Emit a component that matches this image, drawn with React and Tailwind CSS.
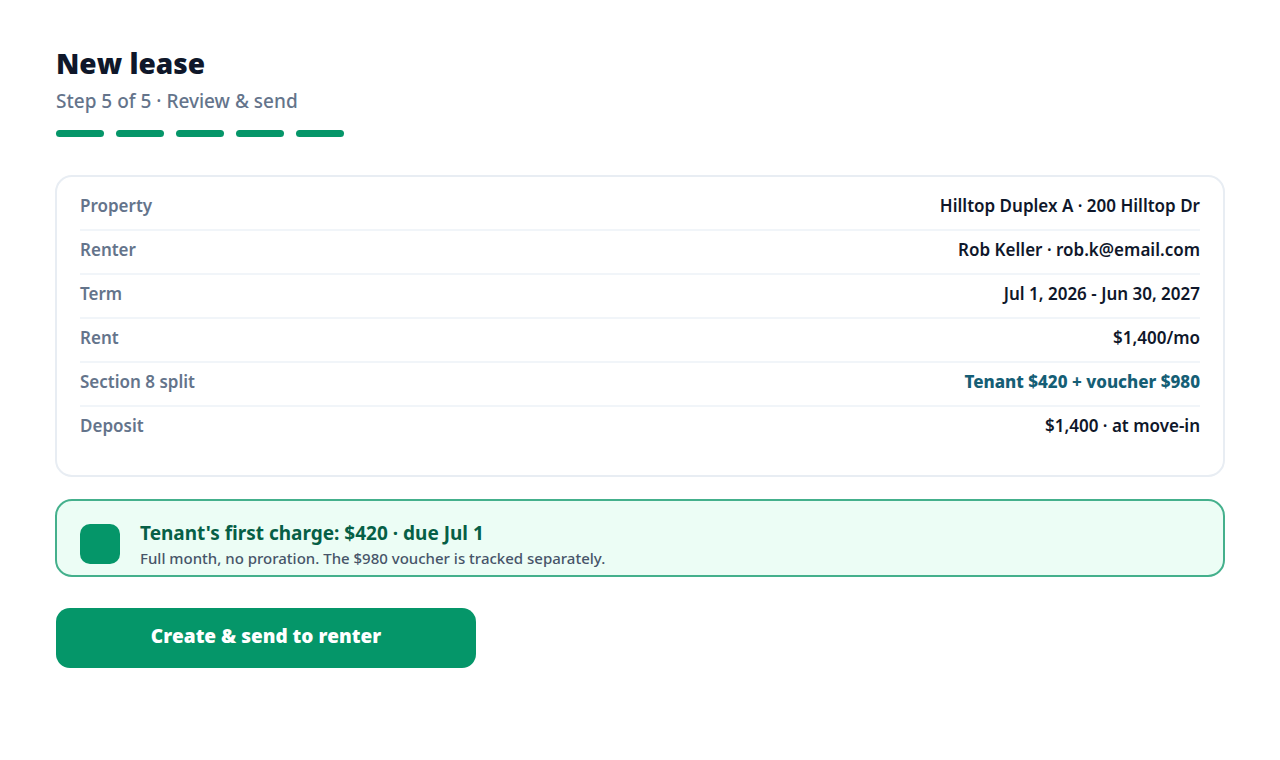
import React from 'react';

const steps = ['Property', 'Renter', 'Terms', 'Deposit', 'Review'];

const summary = [
  { label: 'Property', value: 'Hilltop Duplex A · 200 Hilltop Dr' },
  { label: 'Renter', value: 'Rob Keller · rob.k@email.com' },
  { label: 'Term', value: 'Jul 1, 2026 - Jun 30, 2027' },
  { label: 'Rent', value: '$1,400/mo' },
  { label: 'Section 8 split', value: 'Tenant $420 + voucher $980', highlight: true },
  { label: 'Deposit', value: '$1,400 · at move-in' },
];

function App() {
  return (
    <main className="min-h-screen bg-white px-14 pt-11 pb-11 font-['Segoe_UI','Noto_Sans',sans-serif]">
      {/* Header */}
      <header>
        <h1 className="font-['Segoe_UI','Open_Sans',sans-serif] text-[28px] leading-[38px] font-black text-[#0f172a]">New lease</h1>
        <p className="mt-[5px] text-[19px] leading-7 font-medium text-[#64748b]">Step 5 of 5 · Review &amp; send</p>
        <div className="mt-[15px] flex gap-3">
          {steps.map((step) => (
            <div key={step} className="h-[7px] w-12 rounded-full bg-[#059669]"></div>
          ))}
        </div>
      </header>

      {/* Lease summary */}
      <dl className="-mx-px mt-[38px] rounded-[17px] border-2 border-[#e8edf3] px-[23px] pt-[10px] pb-6 text-[17px] leading-6 font-semibold">
        {summary.map((row) => (
          <div key={row.label} className="flex justify-between border-b-2 border-[#f1f5f9] pt-[7px] pb-[11px] last:border-transparent">
            <dt className="text-[#64748b]">{row.label}</dt>
            <dd className={row.highlight ? 'font-extrabold text-[#155e75]' : 'text-[#0f172a]'}>{row.value}</dd>
          </div>
        ))}
      </dl>

      {/* First charge */}
      <section className="-mx-px mt-[22px] flex gap-5 rounded-[17px] border-2 border-[#44b08c] bg-[#ecfdf5] px-[23px] pt-[18px] pb-[7px]">
        <div className="mt-[5px] h-10 w-10 shrink-0 rounded-[10px] bg-[#059669]"></div>
        <div>
          <h2 className="text-[19px] leading-7 font-bold text-[#065f46]">Tenant's first charge: $420 · due Jul 1</h2>
          <p className="mt-px text-[15px] leading-5 font-medium text-[#475569]">
            Full month, no proration. The $980 voucher is tracked separately.
          </p>
        </div>
      </section>

      <button type="button" className="mt-[31px] h-15 w-full max-w-[420px] rounded-[14px] bg-[#059669] pb-[3px] font-['Segoe_UI','Open_Sans',sans-serif] text-[19px] font-extrabold text-white">
        Create &amp; send to renter
      </button>
    </main>
  );
}

export default App;
